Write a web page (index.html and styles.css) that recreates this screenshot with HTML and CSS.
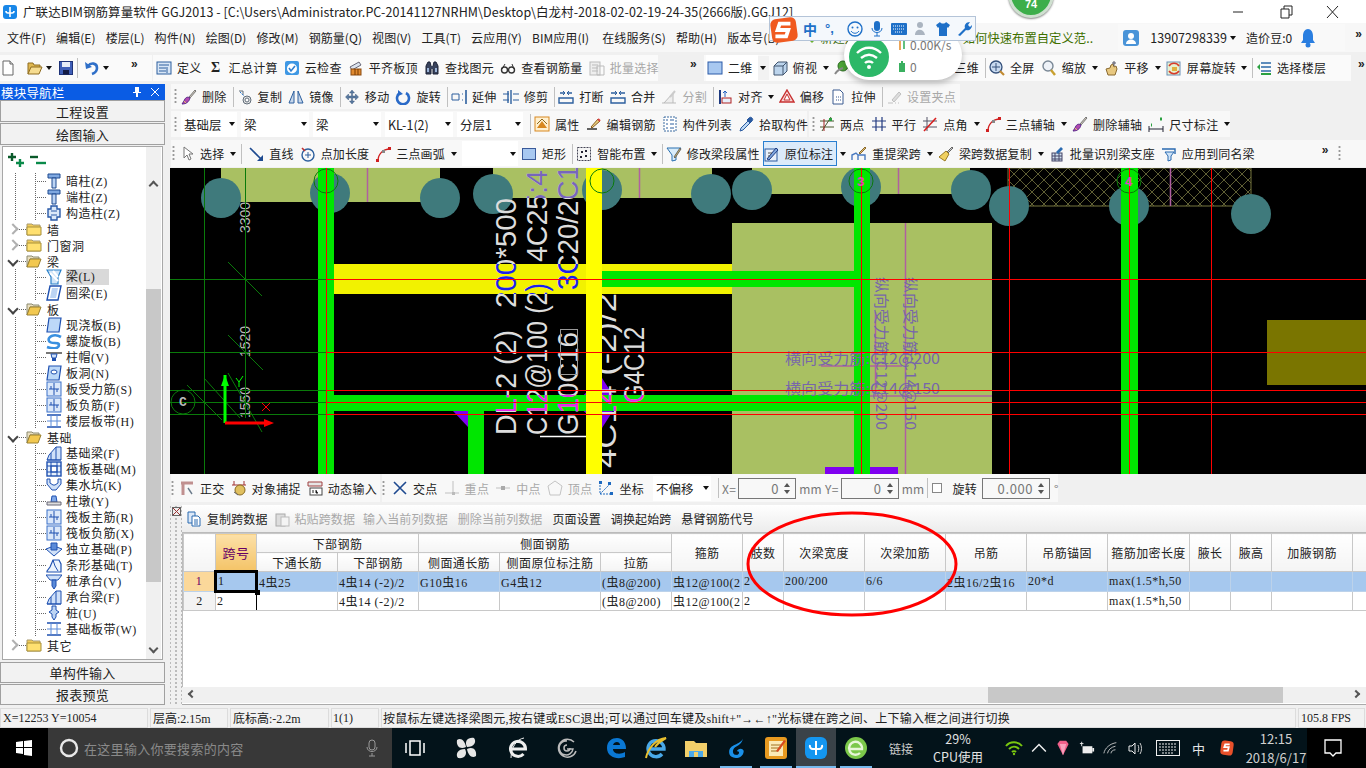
FILE: index.html
```html
<!DOCTYPE html>
<html lang="zh">
<head>
<meta charset="utf-8">
<title>GGJ2013</title>
<link rel="stylesheet" href="styles.css">
</head>
<body>
<svg class="sprite" aria-hidden="true">
<defs>
<symbol id="new" viewBox="0 0 16 16"><path d="M3 1h7l3 3v11H3z" fill="#fff" stroke="#666"/><path d="M10 1v3h3" fill="#ddd" stroke="#666"/></symbol>
<symbol id="open" viewBox="0 0 16 16"><path d="M1 14V3h5l1 2h6v2" fill="#e0b850" stroke="#8f6c20"/><path d="M1 14l3-7h11l-3 7z" fill="#f6dc90" stroke="#8f6c20"/></symbol>
<symbol id="save" viewBox="0 0 16 16"><rect x="1.5" y="1.5" width="13" height="13" fill="#3f5fb8" stroke="#1f3378"/><rect x="4" y="2" width="8" height="5" fill="#e6ecf8"/><rect x="5" y="10" width="6" height="4.5" fill="#121a44"/></symbol>
<symbol id="undo" viewBox="0 0 16 16"><path d="M4 6c3-4 9-3 9 2 0 3-2 5-5 6" fill="none" stroke="#2f6fc8" stroke-width="2.6"/><path d="M1 2l1 7 6-2z" fill="#2f6fc8"/></symbol>
<symbol id="def" viewBox="0 0 16 16"><rect x="1" y="2" width="14" height="12" fill="#d8e6f6" stroke="#2c5f9e"/><path d="M3 5h10M3 8h7M3 11h7M11 7v6" stroke="#2c5f9e"/></symbol>
<symbol id="check" viewBox="0 0 16 16"><rect x="1" y="1" width="14" height="14" rx="2" fill="#3f98e4"/><circle cx="8" cy="8.500" r="5" fill="#fff"/><path d="M5 8l2 3 4-5" fill="none" stroke="#2f7fd0" stroke-width="1.600"/></symbol>
<symbol id="flat" viewBox="0 0 16 16"><path d="M2 7l9-5 2 3-9 5z" fill="#dbe3ee" stroke="#667"/><rect x="3" y="9" width="10" height="6" fill="#e08a30" stroke="#8a4a10"/><path d="M7 9v6M10 9v6" stroke="#7a3a00"/></symbol>
<symbol id="bino" viewBox="0 0 16 16"><path d="M2 14V6l2-4h2l1 4v8zM9 14V6l1-4h2l2 4v8z" fill="#39435c" stroke="#1c2236"/><rect x="6" y="6" width="4" height="3" fill="#39435c"/><rect x="3" y="8" width="2" height="4" fill="#9cb4d8"/><rect x="11" y="8" width="2" height="4" fill="#9cb4d8"/></symbol>
<symbol id="glass" viewBox="0 0 16 16"><circle cx="4.500" cy="10" r="3" fill="none" stroke="#333" stroke-width="1.400"/><circle cx="11.500" cy="10" r="3" fill="none" stroke="#333" stroke-width="1.400"/><path d="M2 9l3-5M14 9l-2-5" stroke="#333"/></symbol>
<symbol id="batch" viewBox="0 0 16 16"><rect x="1" y="2" width="10" height="13" fill="#eee" stroke="#bbb"/><path d="M3 5h6M3 8h6M3 11h6M8 6h7v9H8z" fill="none" stroke="#bbb"/></symbol>
<symbol id="sq" viewBox="0 0 16 16"><rect x="1" y="2" width="14" height="12" fill="#a8c8f0" stroke="#2a5aa8"/></symbol>
<symbol id="box3d" viewBox="0 0 16 16"><path d="M2 6l4-4h9v9l-4 4H2z" fill="#bcd4ec" stroke="#40546e"/><path d="M2 6h9v9M11 6l4-4" fill="none" stroke="#40546e"/></symbol>
<symbol id="orbit" viewBox="0 0 16 16"><circle cx="9" cy="6" r="5" fill="#4ea838" stroke="#2a6a20"/><path d="M1 14c2-3 4-5 8-6" stroke="#888" stroke-width="2" fill="none"/></symbol>
<symbol id="zoomf" viewBox="0 0 16 16"><circle cx="7" cy="7" r="6" fill="#c8daf0" stroke="#34507a" stroke-width="1.300"/><path d="M7 3v8M3 7h8" stroke="#34507a"/><path d="M11 11l4 4" stroke="#c08a30" stroke-width="2.200"/></symbol>
<symbol id="zoom" viewBox="0 0 16 16"><circle cx="7" cy="6" r="5" fill="#eef2f8" stroke="#7a8896" stroke-width="1.400"/><path d="M10 10l4 5" stroke="#c8a030" stroke-width="2.400"/></symbol>
<symbol id="pan" viewBox="0 0 16 16"><path d="M3 9l2 6h7l2-6-1-3-2 1-1-3-2 1-1 3z" fill="#e8c880" stroke="#8a6a30"/><path d="M11 1v5M9 3h4" stroke="#556"/></symbol>
<symbol id="scr" viewBox="0 0 16 16"><rect x="1" y="2" width="13" height="13" fill="#e6f0d0" stroke="#6a90b8"/><path d="M3 6a6 6 0 0 1 10 0M13 11a6 6 0 0 1-10 0" fill="none" stroke="#d83a2a" stroke-width="1.500"/><rect x="6" y="7" width="5" height="4" fill="#e0b040"/></symbol>
<symbol id="floor" viewBox="0 0 16 16"><path d="M5 3h10M5 7h10M5 11h10" stroke="#2c6aa8" stroke-width="1.600"/><path d="M5 14h10" stroke="#2aa040" stroke-width="2"/><path d="M1 7l3-3v6z" fill="#2aa040"/></symbol>
<symbol id="brush" viewBox="0 0 16 16"><path d="M8 8l6-7 1 1-6 7z" fill="#d8d0c0" stroke="#777"/><path d="M9 9c-3-2-5 0-6 3l-2 3c4 0 7-2 8-6z" fill="#b04ab0" stroke="#5a2a8a"/><path d="M3 12l2 2" stroke="#e8c060"/></symbol>
<symbol id="copy" viewBox="0 0 16 16"><circle cx="10" cy="11" r="4" fill="#e8e8e8" stroke="#606c78"/><circle cx="10" cy="11" r="2" fill="#fff" stroke="#606c78"/><path d="M2 2h4v4" fill="none" stroke="#606c78"/><path d="M3 3l4 4" stroke="#2a7ad0" stroke-dasharray="2 1"/></symbol>
<symbol id="mirror" viewBox="0 0 16 16"><path d="M6 2v12H1zM10 2v12h5z" fill="#c8d8ec" stroke="#2c5f9e"/></symbol>
<symbol id="move" viewBox="0 0 16 16"><path d="M8 1l2.500 3h-2v3h3v-2l3 3-3 3V9h-3v3h2L8 15l-2.500-3h2V9h-3v2l-3-3 3-3v2h3V4h-2z" fill="#5a7aa0" stroke="#2c4a70" stroke-width=".4"/></symbol>
<symbol id="rot" viewBox="0 0 16 16"><path d="M5 4a6 6 0 1 0 6 0" fill="none" stroke="#2a6ac8" stroke-width="2.600"/><path d="M3 1v6l5-2z" fill="#2a6ac8"/></symbol>
<symbol id="extend" viewBox="0 0 16 16"><path d="M1 5h7v6H1zM11 5h1M11 11h1" fill="none" stroke="#2c5f9e"/><path d="M15 1v14" stroke="#2c5f9e" stroke-width="1.600"/></symbol>
<symbol id="trim" viewBox="0 0 16 16"><path d="M0 5h6M0 11h6M10 5h6M10 11h6" stroke="#2c5f9e"/><path d="M8 1v14M5 2v12" stroke="#2c5f9e" stroke-width="1.400"/></symbol>
<symbol id="break" viewBox="0 0 16 16"><path d="M1 9h14v5H1z" fill="none" stroke="#2c5f9e" stroke-width="1.400"/><path d="M2 4h4M14 4h-4" stroke="#2c5f9e" stroke-width="1.400"/><path d="M5 2l2 2-2 2M11 2L9 4l2 2" fill="none" stroke="#2c5f9e"/></symbol>
<symbol id="merge" viewBox="0 0 16 16"><path d="M1 9h14v5H1z" fill="none" stroke="#2c5f9e" stroke-width="1.400"/><path d="M1 4h5M15 4h-5" stroke="#2c5f9e" stroke-width="1.400"/><path d="M5 2l2 2-2 2M11 2L9 4l2 2" fill="none" stroke="#2c5f9e"/></symbol>
<symbol id="split" viewBox="0 0 16 16"><path d="M1 14h14M3 14l9-10v10" fill="#eee" stroke="#bbb"/><path d="M9 8l5-6" stroke="#ccc" stroke-width="2"/></symbol>
<symbol id="alignv" viewBox="0 0 16 16"><path d="M3 1v14" stroke="#1e3a80" stroke-width="2"/><rect x="5" y="9" width="9" height="5" fill="#e8f0fa" stroke="#b02020"/><path d="M8 2v6M6 4l2-2 2 2" stroke="#2060c0" fill="none"/></symbol>
<symbol id="offset" viewBox="0 0 16 16"><path d="M8 1l7 12H1z" fill="#f6d8d8" stroke="#c83030" stroke-width="1.400"/><path d="M8 5l3 6H5z" fill="#fff" stroke="#c83030"/></symbol>
<symbol id="stretch" viewBox="0 0 16 16"><path d="M3 1h7l3 3v11H3z" fill="#fff" stroke="#3a5a90"/><path d="M6 8h5M6 11h5" stroke="#3a5a90" stroke-dasharray="1 1"/></symbol>
<symbol id="grip2" viewBox="0 0 16 16"><path d="M2 14h5M9 14h1M12 14h1M6 11l7-8 2 2-7 8z" fill="#ddd" stroke="#c0c0c0"/></symbol>
<symbol id="attr" viewBox="0 0 16 16"><rect x="1" y="1" width="14" height="14" fill="#fff0d0" stroke="#d88820"/><path d="M3 12l5-7 5 7z" fill="#d88820"/><path d="M3 8l5-5 5 5" fill="none" stroke="#8a6a20"/></symbol>
<symbol id="edit" viewBox="0 0 16 16"><path d="M1 13h10" stroke="#222" stroke-width="1.400"/><path d="M5 11l7-8 2 2-8 7z" fill="#e8d080" stroke="#8a5a20"/><path d="M12 3l2 2" stroke="#d84040" stroke-width="2"/></symbol>
<symbol id="list" viewBox="0 0 16 16"><rect x="2" y="1" width="12" height="14" fill="#fff" stroke="#3a6aa0" stroke-dasharray="2 1"/><path d="M4 4h2M8 4h4M4 8h2M8 8h4M4 12h2M8 12h4" stroke="#2c5f9e"/></symbol>
<symbol id="pipette" viewBox="0 0 16 16"><path d="M2 15l1-3 7-7 2 2-7 7z" fill="#bcd8f4" stroke="#2a5aa0"/><path d="M10 3l3 3M11 2a2 2 0 0 1 3 3l-2 2-3-3z" fill="#2a5aa0" stroke="#2a5aa0"/></symbol>
<symbol id="twopt" viewBox="0 0 16 16"><path d="M1 5h14M1 11h14M12 1L3 15" stroke="#4a5a30"/><path d="M5 3v12" stroke="#a02020"/><rect x="10" y="2" width="3" height="3" fill="#2aa040"/></symbol>
<symbol id="para" viewBox="0 0 16 16"><path d="M1 5h14M1 11h14M5 1v14M11 1v14" stroke="#223a80" stroke-width="1.200"/></symbol>
<symbol id="ang" viewBox="0 0 16 16"><path d="M1 5h14M1 11h14M5 1v14" stroke="#556"/><path d="M2 15L14 2" stroke="#d82020" stroke-width="1.600"/></symbol>
<symbol id="arc3" viewBox="0 0 16 16"><path d="M3 15C3 8 8 3 15 3" fill="none" stroke="#d02020" stroke-width="1.400"/><rect x="1" y="13" width="3" height="3" fill="#d02020"/><rect x="7" y="4" width="3" height="3" fill="#888"/><rect x="13" y="1" width="3" height="3" fill="#d02020"/></symbol>
<symbol id="dim" viewBox="0 0 16 16"><path d="M1 13h14M1 10v6M15 10v6" stroke="#223"/><path d="M3 9h1M12 3h2" stroke="#2aa040" stroke-width="3"/></symbol>
<symbol id="cursor" viewBox="0 0 16 16"><path d="M5 1v11l3-3 2 5 2-1-2-5h4z" fill="#fff" stroke="#777"/></symbol>
<symbol id="line" viewBox="0 0 16 16"><path d="M2 2l11 11" stroke="#1e4a90" stroke-width="1.600"/><path d="M15 15h-6l6-6z" fill="#1e4a90"/></symbol>
<symbol id="ptlen" viewBox="0 0 16 16"><circle cx="8" cy="9" r="6" fill="none" stroke="#2c5f9e" stroke-width="1.400"/><path d="M8 6v6M5 9h6" stroke="#2c5f9e"/><path d="M2 2l3 3" stroke="#c03030" stroke-width="1.600"/></symbol>
<symbol id="rect" viewBox="0 0 16 16"><rect x="1.500" y="2.500" width="13" height="11" fill="#a8c8f0" stroke="#3a5a9a"/></symbol>
<symbol id="smart" viewBox="0 0 16 16"><rect x="1.500" y="1.500" width="13" height="13" fill="#f4f4f4" stroke="#445" stroke-dasharray="2 1"/><path d="M5 5h2v2H5zM9 9h2v2H9zM9 4h2v2H9zM4 10h2v2H4z" fill="#223"/></symbol>
<symbol id="filter" viewBox="0 0 16 16"><path d="M1 2h14l-5 7v5l-4 1V9z" fill="#d8ecfa" stroke="#2a70b0"/><path d="M8 11l6-9 1 1-6 9z" fill="#e0c060" stroke="#666"/></symbol>
<symbol id="orig" viewBox="0 0 16 16"><rect x="1" y="3" width="12" height="12" fill="#e8f0fa" stroke="#2a5aa0"/><path d="M3 13l9-11 2 2-9 10z" fill="#7fa8e0" stroke="#1e3a80"/><path d="M4 7h4M4 10h2" stroke="#555"/></symbol>
<symbol id="respan" viewBox="0 0 16 16"><path d="M1 14V9l4-2 2 2v5M7 14V9h7v5" fill="none" stroke="#4a7ac0" stroke-width="1.400"/><path d="M8 7l6-6 1 1-6 6z" fill="#e0c070" stroke="#8a6a30"/></symbol>
<symbol id="broom" viewBox="0 0 16 16"><path d="M9 6l5-5 1 1-5 5z" fill="#ccc" stroke="#666"/><path d="M8 5l3 3-4 7-6-4z" fill="#f0d060" stroke="#9a7a20"/></symbol>
<symbol id="bsup" viewBox="0 0 16 16"><rect x="3" y="7" width="10" height="8" fill="#d0e0f0" stroke="#446"/><path d="M3 10h10M3 13h10M6 7v8M10 7v8" stroke="#446"/><path d="M7 6l5-5 2 2-5 5z" fill="#2a6ab0"/></symbol>
<symbol id="apply" viewBox="0 0 16 16"><path d="M1 3h13v5" fill="none" stroke="#2a6ab0" stroke-width="1.400"/><path d="M4 6l9 0-3 4v4l-3 1v-5z" fill="#cfe4f8" stroke="#2a6ab0"/></symbol>
<symbol id="ortho" viewBox="0 0 16 16"><path d="M2 3h12" stroke="#c09090" stroke-width="3"/><path d="M4 3v12" stroke="#c09090" stroke-width="3"/><path d="M9 8l4 6" stroke="#6a7a8a" stroke-width="1.400"/></symbol>
<symbol id="snap" viewBox="0 0 16 16"><path d="M3 1v4M13 1v4M1 5h14" stroke="#a03030"/><circle cx="9" cy="10" r="5" fill="#e0c060" stroke="#8a6a20"/><path d="M3 12l4 3" stroke="#666"/></symbol>
<symbol id="dyn" viewBox="0 0 16 16"><path d="M1 2h14v4H1z" fill="#e6e6e6" stroke="#a04040"/><rect x="3" y="8" width="12" height="7" fill="#fff" stroke="#444"/><path d="M6 10v3M9 10v3h2" stroke="#222"/></symbol>
<symbol id="xpt" viewBox="0 0 16 16"><path d="M2 2l12 12M14 2L2 14" stroke="#1e4a90" stroke-width="1.600"/></symbol>
<symbol id="perp" viewBox="0 0 16 16"><path d="M9 1v12M1 13h14" stroke="#c0c0c0"/><rect x="8" y="12" width="3" height="3" fill="#bbb"/></symbol>
<symbol id="mid" viewBox="0 0 16 16"><path d="M1 8h14" stroke="#c0c0c0"/><rect x="6" y="6" width="4" height="4" fill="#aaa"/></symbol>
<symbol id="vert" viewBox="0 0 16 16"><path d="M8 1l7 5-2 9H3L1 6z" fill="#f8f8f8" stroke="#c4c4c4"/></symbol>
<symbol id="coord" viewBox="0 0 16 16"><path d="M2 2v12h12M2 14l10-10" stroke="#1e6ac0" stroke-dasharray="2 1" fill="none"/><path d="M1 1h3v3H1zM12 12h3v3h-3zM10 2h3v3h-3z" fill="#1e6ac0"/></symbol>
<symbol id="paste" viewBox="0 0 16 16"><rect x="2" y="3" width="9" height="12" fill="#ddd" stroke="#aaa"/><rect x="7" y="6" width="8" height="9" fill="#f4f4f4" stroke="#bbb"/></symbol>
<symbol id="dup" viewBox="0 0 16 16"><path d="M2 1h7v11H2z" fill="#dbe8f8" stroke="#2a6ab0"/><path d="M6 5h6l2 2v8H6z" fill="#fff" stroke="#2a6ab0"/><path d="M8 9h4M8 11h4M8 13h4" stroke="#2a6ab0"/></symbol>
<symbol id="col" viewBox="0 0 16 16"><path d="M2 1h12v4H2z" fill="#7fa8e0" stroke="#1e4a90"/><path d="M6 5h4v10H6z" fill="#bcd4f4" stroke="#1e4a90"/></symbol>
<symbol id="gcol" viewBox="0 0 16 16"><path d="M5 1h6v3h3v8h-3v3H5v-3H2V4h3z" fill="#dbe8f8" stroke="#2a5aa8" stroke-width="1.400"/><path d="M5 6h6M5 10h6" stroke="#2a5aa8"/></symbol>
<symbol id="fc" viewBox="0 0 16 16"><path d="M1 3h5l1 1h7v10H1z" fill="#f2cc58" stroke="#a89a70"/><path d="M1 6h14v8H1z" fill="#ffe070" stroke="#a8903a"/></symbol>
<symbol id="fo" viewBox="0 0 16 16"><path d="M1 3h5l1 1h6v2H4l-3 8z" fill="#eadfc0" stroke="#8a8a70"/><path d="M1 14l3-8h11l-3 8z" fill="#f2c850" stroke="#9a8030"/></symbol>
<symbol id="beam" viewBox="0 0 16 16"><path d="M1 1h14l-3 7v7H5V8z" fill="#cfe4f8" stroke="#2a80c8" stroke-width="1.200"/><path d="M4 4l8 8M7 2l5 6" stroke="#fff" stroke-width="2"/></symbol>
<symbol id="ring" viewBox="0 0 16 16"><path d="M4 1h11l-3 14H1z" fill="#fff" stroke="#1e50b0" stroke-width="1.400"/><path d="M6 3h6l-2 10H4z" fill="#bcd4f4"/></symbol>
<symbol id="plate" viewBox="0 0 16 16"><path d="M3 1h12l-2 14H1z" fill="#bcd8f8" stroke="#1e50b0" stroke-width="1.200"/></symbol>
<symbol id="spiral" viewBox="0 0 16 16"><path d="M15 4C8 0 1 4 3 8s10 0 10 4-6 4-12 2" fill="none" stroke="#3a90e0" stroke-width="2.600"/></symbol>
<symbol id="cap" viewBox="0 0 16 16"><path d="M0 3h16v2H0z" fill="#777"/><path d="M5 5h6l-1 4H6z" fill="#cfe0f8" stroke="#1e50b0"/><path d="M6 9h4v3H6z" fill="#1e50b0"/></symbol>
<symbol id="hole" viewBox="0 0 16 16"><path d="M3 1h12l-2 14H1z" fill="#bcd8f8" stroke="#1e50b0" stroke-width="1.200"/><ellipse cx="8" cy="7" rx="3" ry="2" fill="#fff" stroke="#1e50b0"/></symbol>
<symbol id="rebar" viewBox="0 0 16 16"><rect x="1" y="1" width="14" height="14" fill="#dbe8fa" stroke="#3a70c8"/><path d="M8 2v12M3 8h10M5 5v3M11 8v3" stroke="#1e50b0"/></symbol>
<symbol id="band" viewBox="0 0 16 16"><path d="M1 2h14M1 14h14" stroke="#1e50b0" stroke-width="1.600"/><path d="M5 2v12M11 2v12M1 8h14" stroke="#5a8ad8"/></symbol>
<symbol id="fb" viewBox="0 0 16 16"><path d="M1 15l2-5 7-8 5 0v13z" fill="#cfe0f8" stroke="#1e50b0"/><path d="M10 2v13M1 15h14M5 8v7" stroke="#1e50b0"/></symbol>
<symbol id="raft" viewBox="0 0 16 16"><rect x="1" y="1" width="14" height="14" fill="#e6f0fc" stroke="#1e50b0" stroke-width="1.400"/><rect x="5" y="5" width="6" height="6" fill="#fff" stroke="#1e50b0"/><path d="M5 1v14M11 1v14M1 5h14M1 11h14" stroke="#1e50b0"/></symbol>
<symbol id="pit" viewBox="0 0 16 16"><path d="M1 2h3v4l3 2h2l3-2V2h3v5l-5 6H6L1 7z" fill="#cfe0f8" stroke="#1e50b0"/></symbol>
<symbol id="pier" viewBox="0 0 16 16"><path d="M6 3h4l1 6H5z" fill="#7fa8e8" stroke="#1e50b0"/><path d="M1 9h14v3H1z" fill="#ddd" stroke="#667"/></symbol>
<symbol id="iso" viewBox="0 0 16 16"><path d="M0 8l8-3 8 3-8 7z" fill="#cfe0f8" stroke="#1e50b0"/><path d="M5 2h6v7H5z" fill="#5a8ad8" stroke="#1e50b0"/></symbol>
<symbol id="strip" viewBox="0 0 16 16"><path d="M1 14l3-4 3-7h6l2 4v8H1z" fill="#eaf2fc" stroke="#1e50b0" stroke-width="1.200"/><path d="M7 3l2 6 3 5" fill="none" stroke="#1e50b0"/></symbol>
<symbol id="pc" viewBox="0 0 16 16"><path d="M0 2h16l-4 5H4z" fill="#cfe0f8" stroke="#1e50b0"/><path d="M6 7h4v6l-2 3-2-3z" fill="#5a8ad8" stroke="#1e50b0"/></symbol>
<symbol id="pile" viewBox="0 0 16 16"><path d="M6 1h4v4l3 2-3 2v3l-2 3-2-3V9L3 7l3-2z" fill="#bcd4f4" stroke="#1e50b0"/></symbol>
</defs>
</svg>

<div class="app">
  <header class="titlebar">
    <svg class="tlogo" viewBox="0 0 14 14"><rect width="14" height="14" rx="3" fill="#1887e8"/><path d="M7 2v10M3 6a2 2 0 0 0 2 2h4a2 2 0 0 0 2-2" fill="none" stroke="#fff" stroke-width="1.600"/></svg>
    <span class="ttext">广联达BIM钢筋算量软件 GGJ2013 - [C:\Users\Administrator.PC-20141127NRHM\Desktop\白龙村-2018-02-02-19-24-35(2666版).GGJ12]</span>
    <span class="winctl">
      <svg viewBox="0 0 46 20"><path d="M0 10h10" stroke="#222"/></svg>
      <svg viewBox="0 0 46 20"><path d="M2 7h8v9H2zM5 7V4h8v9h-3" fill="none" stroke="#222"/></svg>
      <svg viewBox="0 0 46 20"><path d="M2 4l11 12M13 4L2 16" stroke="#222"/></svg>
    </span>
  </header>

  <nav class="menubar">
    <span>文件(F)</span><span>编辑(E)</span><span>楼层(L)</span><span>构件(N)</span><span>绘图(D)</span><span>修改(M)</span><span>钢筋量(Q)</span><span>视图(V)</span><span>工具(T)</span><span>云应用(Y)</span><span>BIM应用(I)</span><span class="mserv">在线服务(S)</span><span>帮助(H)</span><span>版本号(B)</span>
    <span class="mnew"><svg viewBox="0 0 12 12"><path d="M1 6l5-5 5 5-5 5z" fill="#6ab030"/></svg>新建定义</span>
    <span class="mtip">如何快速布置自定义范..</span>
    <div class="muser">
      <svg class="i" viewBox="0 0 16 16"><rect width="16" height="16" rx="3" fill="#4a94d8"/><circle cx="8" cy="6" r="3" fill="#fff"/><path d="M3 14c0-6 10-6 10 0z" fill="#fff"/></svg>
      <span class="uname">13907298339</span><i class="dd"></i>
      <span class="bean">造价豆:0</span>
      <svg class="bell" viewBox="0 0 14 20"><path d="M7 1c3 0 5 3 5 7v4l2 3H0l2-3V8c0-4 2-7 5-7z" fill="#2a7ee0"/><circle cx="7" cy="17" r="2.500" fill="#2a7ee0"/></svg>
    </div>
    <span class="more mr">»</span>
  </nav>

  <div class="tool1">
    <div class="grp g1">
      <svg class="i"><use href="#new"/></svg>
      <svg class="i m11"><use href="#open"/></svg><i class="dd"></i>
      <svg class="i m4"><use href="#save"/></svg>
      <i class="sep"></i>
      <svg class="i m6"><use href="#undo"/></svg><i class="dd"></i>
      <span class="more m16">»</span>
    </div>
    <div class="grp g2">
      <span class="it"><svg class="i"><use href="#def"/></svg>定义</span>
      <span class="it"><b class="sigma">Σ</b>汇总计算</span>
      <span class="it"><svg class="i"><use href="#check"/></svg>云检查</span>
      <span class="it"><svg class="i"><use href="#flat"/></svg>平齐板顶</span>
      <span class="it"><svg class="i"><use href="#bino"/></svg>查找图元</span>
      <span class="it"><svg class="i"><use href="#glass"/></svg>查看钢筋量</span>
      <span class="it off"><svg class="i"><use href="#batch"/></svg>批量选择</span>
    </div>
    <span class="more m32">»</span>
    <div class="grp g3">
      <span class="it white"><svg class="i"><use href="#sq"/></svg>二维</span><span class="ddbox"><i class="dd"></i></span>
      <span class="it"><svg class="i"><use href="#box3d"/></svg>俯视</span><i class="dd"></i>
      <span class="it"><svg class="i"><use href="#orbit"/></svg>动态观察</span>
      <span class="it gap3d"><svg class="i"><use href="#box3d"/></svg>三维</span>
      <i class="sep"></i>
      <span class="it"><svg class="i"><use href="#zoomf"/></svg>全屏</span>
      <span class="it"><svg class="i"><use href="#zoom"/></svg>缩放</span><i class="dd"></i>
      <span class="it"><svg class="i"><use href="#pan"/></svg>平移</span><i class="dd"></i>
      <span class="it"><svg class="i"><use href="#scr"/></svg>屏幕旋转</span><i class="dd tight"></i>
      <i class="sep"></i>
      <span class="it"><svg class="i"><use href="#floor"/></svg>选择楼层</span>
    </div>
    <span class="more mr2">»</span>
  </div>

  <div class="main">
    <aside class="side">
      <div class="navhead"><span>模块导航栏</span>
        <span class="navctl">
          <svg viewBox="0 0 10 12"><path d="M3 1h4v5h2v1H6v4H4V7H1V6h2z" fill="#fff"/></svg>
          <svg viewBox="0 0 10 12"><path d="M1 2l8 8M9 2l-8 8" stroke="#fff"/></svg>
        </span>
      </div>
      <button class="sbtn">工程设置</button>
      <button class="sbtn">绘图输入</button>
      <div class="tree">
        <div class="treetool">
          <svg viewBox="0 0 20 16"><path d="M2 5h8M6 1v8" stroke="#0a5a2a" stroke-width="2.400"/><path d="M10 11h8M14 7v8" stroke="#0a8a4a" stroke-width="2.400"/></svg>
          <svg viewBox="0 0 20 16"><path d="M2 5h8" stroke="#0a5a2a" stroke-width="2.400"/><path d="M8 11h10" stroke="#0a8a4a" stroke-width="2.400"/></svg>
        </div>
        <div class="rows">
          <div class="r l2"><i class="tk"></i><svg class="i"><use href="#col"/></svg>暗柱(Z)</div>
          <div class="r l2"><i class="tk"></i><svg class="i"><use href="#col"/></svg>端柱(Z)</div>
          <div class="r l2"><i class="tk"></i><svg class="i"><use href="#gcol"/></svg>构造柱(Z)</div>
          <div class="r l1"><i class="ch cl"></i><i class="tk1"></i><svg class="i"><use href="#fc"/></svg>墙</div>
          <div class="r l1"><i class="ch cl"></i><i class="tk1"></i><svg class="i"><use href="#fc"/></svg>门窗洞</div>
          <div class="r l1"><i class="ch ex"></i><i class="tk1"></i><svg class="i"><use href="#fo"/></svg>梁</div>
          <div class="r l2 sel1"><i class="tk"></i><svg class="i"><use href="#beam"/></svg><span class="hl">梁(L)</span></div>
          <div class="r l2"><i class="tk"></i><svg class="i"><use href="#ring"/></svg>圈梁(E)</div>
          <div class="r l1"><i class="ch ex"></i><i class="tk1"></i><svg class="i"><use href="#fo"/></svg>板</div>
          <div class="r l2"><i class="tk"></i><svg class="i"><use href="#plate"/></svg>现浇板(B)</div>
          <div class="r l2"><i class="tk"></i><svg class="i"><use href="#spiral"/></svg>螺旋板(B)</div>
          <div class="r l2"><i class="tk"></i><svg class="i"><use href="#cap"/></svg>柱帽(V)</div>
          <div class="r l2"><i class="tk"></i><svg class="i"><use href="#hole"/></svg>板洞(N)</div>
          <div class="r l2"><i class="tk"></i><svg class="i"><use href="#rebar"/></svg>板受力筋(S)</div>
          <div class="r l2"><i class="tk"></i><svg class="i"><use href="#rebar"/></svg>板负筋(F)</div>
          <div class="r l2"><i class="tk"></i><svg class="i"><use href="#band"/></svg>楼层板带(H)</div>
          <div class="r l1"><i class="ch ex"></i><i class="tk1"></i><svg class="i"><use href="#fo"/></svg>基础</div>
          <div class="r l2"><i class="tk"></i><svg class="i"><use href="#fb"/></svg>基础梁(F)</div>
          <div class="r l2"><i class="tk"></i><svg class="i"><use href="#raft"/></svg>筏板基础(M)</div>
          <div class="r l2"><i class="tk"></i><svg class="i"><use href="#pit"/></svg>集水坑(K)</div>
          <div class="r l2"><i class="tk"></i><svg class="i"><use href="#pier"/></svg>柱墩(Y)</div>
          <div class="r l2"><i class="tk"></i><svg class="i"><use href="#rebar"/></svg>筏板主筋(R)</div>
          <div class="r l2"><i class="tk"></i><svg class="i"><use href="#rebar"/></svg>筏板负筋(X)</div>
          <div class="r l2"><i class="tk"></i><svg class="i"><use href="#iso"/></svg>独立基础(P)</div>
          <div class="r l2"><i class="tk"></i><svg class="i"><use href="#strip"/></svg>条形基础(T)</div>
          <div class="r l2"><i class="tk"></i><svg class="i"><use href="#pc"/></svg>桩承台(V)</div>
          <div class="r l2"><i class="tk"></i><svg class="i"><use href="#fb"/></svg>承台梁(F)</div>
          <div class="r l2"><i class="tk"></i><svg class="i"><use href="#pile"/></svg>桩(U)</div>
          <div class="r l2 last"><i class="tk"></i><svg class="i"><use href="#band"/></svg>基础板带(W)</div>
          <div class="r l1"><i class="ch cl"></i><i class="tk1"></i><svg class="i"><use href="#fc"/></svg>其它</div>
        </div>
        <div class="vscroll">
          <i class="arr up"></i>
          <i class="thumb"></i>
          <i class="arr down"></i>
        </div>
      </div>
      <button class="sbtn b2">单构件输入</button>
      <button class="sbtn b2">报表预览</button>
    </aside>

    <section class="work">
      <div class="row r2">
        <i class="grip"></i>
        <span class="it"><svg class="i"><use href="#brush"/></svg>删除</span><i class="sep"></i>
        <span class="it"><svg class="i"><use href="#copy"/></svg>复制</span>
        <span class="it"><svg class="i"><use href="#mirror"/></svg>镜像</span><i class="sep"></i>
        <span class="it"><svg class="i"><use href="#move"/></svg>移动</span>
        <span class="it"><svg class="i"><use href="#rot"/></svg>旋转</span><i class="sep"></i>
        <span class="it"><svg class="i"><use href="#extend"/></svg>延伸</span>
        <span class="it"><svg class="i"><use href="#trim"/></svg>修剪</span><i class="sep"></i>
        <span class="it"><svg class="i"><use href="#break"/></svg>打断</span>
        <span class="it"><svg class="i"><use href="#merge"/></svg>合并</span>
        <span class="it off"><svg class="i"><use href="#split"/></svg>分割</span><i class="sep"></i>
        <span class="it"><svg class="i"><use href="#alignv"/></svg>对齐</span><i class="dd tight"></i>
        <span class="it"><svg class="i"><use href="#offset"/></svg>偏移</span>
        <span class="it"><svg class="i"><use href="#stretch"/></svg>拉伸</span><i class="sep"></i>
        <span class="it off"><svg class="i"><use href="#grip2"/></svg>设置夹点</span>
      </div>
      <div class="row3wrap">
        <div class="row r3">
          <i class="grip"></i>
          <span class="sel s56">基础层<i class="dd"></i></span>
          <span class="sel s68">梁<i class="dd"></i></span>
          <span class="sel s68">梁<i class="dd"></i></span>
          <span class="sel s68">KL-1(2)<i class="dd"></i></span>
          <span class="sel s66">分层1<i class="dd"></i></span><i class="sep"></i>
          <span class="it"><svg class="i"><use href="#attr"/></svg>属性</span>
          <span class="it"><svg class="i"><use href="#edit"/></svg>编辑钢筋</span>
          <span class="it"><svg class="i"><use href="#list"/></svg>构件列表</span>
          <span class="it"><svg class="i"><use href="#pipette"/></svg>拾取构件</span>
        </div>
        <div class="row r3b">
          <i class="grip"></i>
          <span class="it"><svg class="i"><use href="#twopt"/></svg>两点</span>
          <span class="it"><svg class="i"><use href="#para"/></svg>平行</span>
          <span class="it"><svg class="i"><use href="#ang"/></svg>点角</span><i class="dd"></i>
          <span class="it"><svg class="i"><use href="#arc3"/></svg>三点辅轴</span><i class="dd"></i>
          <span class="it"><svg class="i"><use href="#brush"/></svg>删除辅轴</span>
          <span class="it"><svg class="i"><use href="#dim"/></svg>尺寸标注</span><i class="dd"></i>
        </div>
      </div>
      <div class="row r4">
        <i class="grip"></i>
        <span class="it"><svg class="i"><use href="#cursor"/></svg>选择</span><i class="dd"></i><i class="sep sepx"></i>
        <span class="it"><svg class="i"><use href="#line"/></svg>直线</span>
        <span class="it"><svg class="i"><use href="#ptlen"/></svg>点加长度</span>
        <span class="it"><svg class="i"><use href="#arc3"/></svg>三点画弧</span><i class="dd"></i>
        <span class="sel s56 blank"><i class="dd"></i></span>
        <span class="it"><svg class="i"><use href="#rect"/></svg>矩形</span><i class="sep"></i>
        <span class="it"><svg class="i"><use href="#smart"/></svg>智能布置</span><i class="dd tight"></i><i class="sep"></i>
        <span class="it"><svg class="i"><use href="#filter"/></svg>修改梁段属性</span>
        <span class="it act"><svg class="i"><use href="#orig"/></svg>原位标注</span><i class="dd"></i>
        <span class="it"><svg class="i"><use href="#respan"/></svg>重提梁跨</span><i class="dd"></i>
        <span class="it"><svg class="i"><use href="#broom"/></svg>梁跨数据复制</span><i class="dd"></i>
        <span class="it"><svg class="i"><use href="#bsup"/></svg>批量识别梁支座</span>
        <span class="it"><svg class="i"><use href="#apply"/></svg>应用到同名梁</span>
        <span class="more m64">»</span>
        <i class="grip gr"></i>
      </div>

      <svg class="canvas" viewBox="170 168 1196 306" role="img" aria-label="梁平面布置图">
        <defs>
          <pattern id="hatch" width="12" height="12" patternUnits="userSpaceOnUse"><path d="M0 0l12 12M12 0L0 12" class="hl-line"/></pattern>
          <clipPath id="onYellow"><rect x="334" y="264" width="252" height="30"/></clipPath>
          <clipPath id="onGreen"><rect x="334" y="395" width="520" height="16"/></clipPath>
          <clipPath id="onOlive"><rect x="493" y="168" width="219" height="30"/></clipPath>
          <g id="captions">
            <text transform="translate(516,435) rotate(-90)" textLength="105" lengthAdjust="spacingAndGlyphs">DL-2 (2)</text>
            <text transform="translate(516,308) rotate(-90)" textLength="110" lengthAdjust="spacingAndGlyphs">200*500</text>
            <text transform="translate(547,435) rotate(-90)" textLength="152" lengthAdjust="spacingAndGlyphs">C12@100 (2)</text>
            <text transform="translate(547,262) rotate(-90)" textLength="92" lengthAdjust="spacingAndGlyphs">4C25:4</text>
            <text transform="translate(578,435) rotate(-90)" textLength="103" lengthAdjust="spacingAndGlyphs">G10C16</text>
            <text transform="translate(578,290) rotate(-90)" textLength="125" lengthAdjust="spacingAndGlyphs">3C20/2C1</text>
            <text transform="translate(616,468) rotate(-90)" textLength="175" lengthAdjust="spacingAndGlyphs">4C14 (-2)/2</text>
            <text transform="translate(644,403) rotate(-90)" textLength="76" lengthAdjust="spacingAndGlyphs">G4C12</text>
          </g>
        </defs>
        <rect x="170" y="168" width="1196" height="306" fill="#000"/>
        <g class="olive">
          <rect x="221" y="168" width="219" height="34"/>
          <rect x="493" y="168" width="219" height="30"/>
          <rect x="752" y="168" width="218" height="26"/>
          <rect x="732" y="223" width="260" height="251"/>
        </g>
        <rect x="1267" y="320" width="99" height="65" class="dkolive"/>
        <rect x="1008" y="168" width="243" height="38" fill="url(#hatch)" class="hatch"/>
        <g class="teal">
          <ellipse cx="221" cy="198" rx="20" ry="20"/><ellipse cx="330" cy="193" rx="20" ry="20"/><ellipse cx="440" cy="198" rx="20" ry="20"/>
          <ellipse cx="493" cy="194" rx="20" ry="20"/><ellipse cx="602" cy="190" rx="20" ry="20"/><ellipse cx="711" cy="194" rx="20" ry="20"/>
          <ellipse cx="752" cy="190" rx="20" ry="20"/><ellipse cx="861" cy="187" rx="20" ry="20"/><ellipse cx="971" cy="190" rx="20" ry="20"/>
          <ellipse cx="1009" cy="206" rx="20" ry="20"/><ellipse cx="1129" cy="206" rx="20" ry="20"/><ellipse cx="1251" cy="214" rx="20" ry="20"/>
        </g>
        <g class="mag">
          <path d="M367.500 168v34M639.500 168v30M898.500 168v26M1170.500 168v38M905.500 223v251M732 396h260M821 366h81M875.500 312v84"/>
        </g>
        <rect x="334" y="264" width="398" height="30" class="yel"/>
        <rect x="602" y="271" width="252" height="16" class="grn"/>
        <path d="M453 411h15v16zM575 403l27-25 16 25-16 25z" class="vio"/>
        <rect x="825" y="467" width="73" height="7" class="vio"/>
        <g class="grn">
          <rect x="318" y="168" width="16" height="306"/><rect x="854" y="168" width="16" height="306"/>
          <rect x="1121" y="168" width="17" height="306"/><rect x="468" y="411" width="16" height="63"/>
          <rect x="334" y="395" width="520" height="16"/>
        </g>
        <g class="capt">
          <use href="#captions" class="c-white"/>
          <use href="#captions" class="c-blue" clip-path="url(#onYellow)"/>
          <use href="#captions" class="c-pink" clip-path="url(#onGreen)"/>
          <use href="#captions" class="c-purple" clip-path="url(#onOlive)"/>
        </g>
        <rect x="560.500" y="329.500" width="17" height="45" class="box"/>
        <path d="M540 436.500h46" class="wline"/>
        <rect x="586" y="168" width="16" height="306" class="yel2"/>
        <g class="purtxt">
          <text x="785" y="364" textLength="155" lengthAdjust="spacingAndGlyphs">横向受力筋:C12@200</text>
          <text x="785" y="394" textLength="155" lengthAdjust="spacingAndGlyphs">横向受力筋:C14@150</text>
          <text transform="translate(876,277) rotate(90)" textLength="153" lengthAdjust="spacingAndGlyphs">纵向受力筋:C12@200</text>
          <text transform="translate(905,277) rotate(90)" textLength="153" lengthAdjust="spacingAndGlyphs">纵向受力筋:C14@150</text>
        </g>
        <g class="dimtxt">
          <text transform="translate(250,233) rotate(-90)">3300</text>
          <text transform="translate(250,357) rotate(-90)">1520</text>
          <text transform="translate(250,418) rotate(-90)">1550</text>
        </g>
        <g class="gline">
          <path d="M204.500 168v306M245.500 168v250M170 279.500h156M170 352.500h156M170 390.500h156M170 402.500h156M170 414.500h156"/>
          <path d="M228 262l34 34M228 335l35 35M187 385l35 35M228 373l34 59M204 378l36 40"/>
          <circle cx="183" cy="402" r="12"/><circle cx="326" cy="181" r="12"/><circle cx="602" cy="181" r="12"/><circle cx="861" cy="181" r="12"/><circle cx="1129" cy="181" r="12"/>
        </g>
        <path d="M326.500 168v306M861.500 168v306M1009.500 168v306M1129.500 168v306M1211.500 168v306M326 279.500h1040M326 352.500h1040M326 390.500h1040M326 402.500h1040M326 414.500h1040" class="rline"/>
        <text x="183" y="406" class="axl">C</text>
        <text x="857" y="186" class="axm">3</text>
        <text x="1125" y="186" class="axm">4</text>
        <path d="M225 375v48" class="axg"/><path d="M221 386l4-11 4 11z" class="axgf"/>
        <path d="M225 423h44" class="axr"/><path d="M264 419l10 4-10 4z" class="axrf"/>
        <path d="M236 378l3 4 4-6M239 382v5" class="thing"/><path d="M262 403l8 8M270 403l-8 8" class="thinr"/>
      </svg>

      <div class="snap">
        <div class="sgrp s1">
          <i class="grip"></i>
          <span class="it"><svg class="i"><use href="#ortho"/></svg>正交</span>
          <span class="it"><svg class="i"><use href="#snap"/></svg>对象捕捉</span>
          <span class="it"><svg class="i"><use href="#dyn"/></svg>动态输入</span>
        </div>
        <div class="sgrp s2">
          <i class="grip"></i>
          <span class="it"><svg class="i"><use href="#xpt"/></svg>交点</span>
          <span class="it off"><svg class="i"><use href="#perp"/></svg>重点</span>
          <span class="it off"><svg class="i"><use href="#mid"/></svg>中点</span>
          <span class="it off"><svg class="i"><use href="#vert"/></svg>顶点</span>
          <span class="it"><svg class="i"><use href="#coord"/></svg>坐标</span>
          <span class="sel s58 m6">不偏移<i class="dd"></i></span>
          <i class="sep"></i>
          <span class="lab">X=</span><span class="spin w56">0<i class="sp"></i></span><span class="lab">mm</span>
          <span class="lab">Y=</span><span class="spin w58">0<i class="sp"></i></span><span class="lab">mm</span>
          <i class="sep"></i>
          <i class="cb"></i><span class="rotl">旋转</span><span class="spin w68">0.000<i class="sp"></i></span><span class="lab deg">°</span>
        </div>
      </div>

      <div class="panel">
        <div class="strip"><svg class="xb" viewBox="0 0 9 9"><rect x=".5" y=".5" width="8" height="8" fill="#eee" stroke="#666"/><path d="M1 1l7 7M8 1L1 8" stroke="#933"/></svg></div>
        <div class="pbody">
          <div class="ptool">
            <span class="it"><svg class="i"><use href="#dup"/></svg>复制跨数据</span>
            <span class="it off"><svg class="i"><use href="#paste"/></svg>粘贴跨数据</span>
            <span class="pt off">输入当前列数据</span>
            <span class="pt off">删除当前列数据</span>
            <span class="pt">页面设置</span>
            <span class="pt">调换起始跨</span>
            <span class="pt">悬臂钢筋代号</span>
          </div>
          <div class="grid">
            <table>
              <colgroup><col class="w32"><col class="w41"><col class="w81"><col class="w81"><col class="w81"><col class="w101"><col class="w71"><col class="w71"><col class="w41"><col class="w81"><col class="w81"><col class="w81"><col class="w81"><col class="w82"><col class="w41"><col class="w41"><col class="w81"><col class="w15"></colgroup>
              <thead>
                <tr><th rowspan="2"></th><th rowspan="2" class="kua">跨号</th><th colspan="2">下部钢筋</th><th colspan="3">侧面钢筋</th><th rowspan="2">箍筋</th><th rowspan="2">肢数</th><th rowspan="2">次梁宽度</th><th rowspan="2">次梁加筋</th><th rowspan="2">吊筋</th><th rowspan="2">吊筋锚固</th><th rowspan="2">箍筋加密长度</th><th rowspan="2">腋长</th><th rowspan="2">腋高</th><th rowspan="2">加腋钢筋</th><th rowspan="2"></th></tr>
                <tr><th>下通长筋</th><th>下部钢筋</th><th>侧面通长筋</th><th>侧面原位标注筋</th><th>拉筋</th></tr>
              </thead>
              <tbody>
                <tr class="on"><td class="no">1</td><td class="cur">1<i class="handle"></i></td><td>4虫25</td><td>4虫14 (-2)/2</td><td>G10虫16</td><td>G4虫12</td><td>(虫8@200)</td><td>虫12@100(2</td><td>2</td><td>200/200</td><td>6/6</td><td>2虫16/2虫16</td><td>20*d</td><td>max(1.5*h,50</td><td></td><td></td><td></td><td></td></tr>
                <tr class="r2nd"><td class="no">2</td><td class="below">2</td><td></td><td>4虫14 (-2)/2</td><td></td><td></td><td>(虫8@200)</td><td>虫12@100(2</td><td>2</td><td></td><td></td><td></td><td></td><td>max(1.5*h,50</td><td></td><td></td><td></td><td></td></tr>
              </tbody>
            </table>
          </div>
          <div class="hscroll"><i class="arr left"></i><i class="hthumb"></i><i class="arr right"></i></div>
        </div>
      </div>
    </section>
  </div>

  <footer class="status">
    <span class="c c1">X=12253 Y=10054</span>
    <span class="c c2">层高:2.15m</span>
    <span class="c c3">底标高:-2.2m</span>
    <span class="c c4">1(1)</span>
    <span class="c c5">按鼠标左键选择梁图元,按右键或ESC退出;可以通过回车键及shift+"→←↑"光标键在跨之间、上下输入框之间进行切换</span>
    <span class="c c6">105.8 FPS</span>
  </footer>

  <div class="taskbar">
    <span class="start"><svg viewBox="0 0 16 16"><path d="M0 2l7-1v6H0zM8 1l8-1v7H8zM0 8h7v6l-7-1zM8 8h8v8l-8-1z" fill="#fff"/></svg></span>
    <div class="search">
      <svg class="cort" viewBox="0 0 20 20"><circle cx="10" cy="10" r="8" fill="none" stroke="#e8e8e8" stroke-width="2.400"/></svg>
      <span class="stext">在这里输入你要搜索的内容</span>
      <svg class="mic" viewBox="0 0 12 18"><rect x="3" y="1" width="6" height="10" rx="3" fill="none" stroke="#999"/><path d="M1 8c0 6 10 6 10 0M6 14v3M3 17h6" fill="none" stroke="#999"/></svg>
    </div>
    <span class="tb t-m3"><svg viewBox="0 0 20 20"><path d="M5 3h10v14H5zM1 5v10M19 5v10" fill="none" stroke="#fff" stroke-width="1.500"/></svg></span>
    <span class="tb t-m11"><svg viewBox="0 0 24 24"><path d="M12 11C6 14 2 10 3 4c4-3 8 1 9 7zM13 11c-3-6 1-10 7-9 3 4 0 9-7 9zM13 13c6-3 10 1 9 7-4 3-8-1-9-7zM11 13c3 6-1 10-7 9-3-4 0-9 7-9z" fill="#e6e6e6"/></svg></span>
    <span class="tb t-m12"><svg viewBox="0 0 24 24"><path d="M5 13h14.500a7.500 7.500 0 1 0-2 5" fill="none" stroke="#eee" stroke-width="3"/><path d="M18 2C11 3 5 11 5 22" fill="none" stroke="#eee"/></svg></span>
    <span class="tb t-m9"><svg viewBox="0 0 24 24"><path d="M19 6a9 9 0 1 0 2 9M12 5a7 7 0 1 0 6 8h-6M12 9a3 3 0 1 0 3 3" fill="none" stroke="#bbb" stroke-width="1.500"/></svg></span>
    <span class="tb t-m9"><svg viewBox="0 0 24 24"><path d="M3 12C3 5 8 2 13 2c6 0 9 5 9 11H9c0 5 7 6 12 3v5c-8 3-18 0-18-9zm6-3h7c0-4-6-4-7 0z" fill="#0a78d4"/></svg></span>
    <span class="tb"><svg viewBox="0 0 24 24"><path d="M5 13h15a8 8 0 1 0-2 5" fill="none" stroke="#49a8e8" stroke-width="3.400"/><path d="M2 22C4 12 12 3 22 2c-4 2-8 5-11 9" fill="none" stroke="#e8c030" stroke-width="2"/></svg></span>
    <span class="tb"><svg viewBox="0 0 24 24"><path d="M1 5h9l2 2h11v14H1z" fill="#f2cf6a"/><rect x="5" y="15" width="14" height="6" fill="#4ca8e8"/><rect x="10" y="16" width="4" height="5" fill="#f2cf6a"/></svg></span>
    <span class="tb run"><svg viewBox="0 0 24 28"><path d="M20 3c-3 8-16 6-16 16 0 9 16 9 17-1 0-4-7-4-8 0 4-1 3 5-1 4-4 0-5-6-1-9 4-2 8-4 9-10z" fill="#1a90e8"/></svg></span>
    <span class="tb run"><svg viewBox="0 0 24 24"><rect x="1" y="1" width="22" height="22" rx="3" fill="#e89a20"/><rect x="5" y="5" width="14" height="15" fill="#fbeab8"/><path d="M7 9h10M7 12h10M7 15h7" stroke="#a07020"/><path d="M12 15l8-11 2 1-8 11z" fill="#d84a20"/></svg></span>
    <span class="tb act2"><svg viewBox="0 0 24 24"><rect x="1" y="1" width="22" height="22" rx="6" fill="#1496f0"/><path d="M12 5v14M6 9a3 3 0 0 0 3 4h6a3 3 0 0 0 3-4" fill="none" stroke="#fff" stroke-width="2"/></svg></span>
    <span class="tb run"><svg viewBox="0 0 24 24"><circle cx="12" cy="12" r="11" fill="#7cc84a"/><path d="M6 13h12a6.500 6.500 0 1 0-2 4" fill="none" stroke="#e8f6d8" stroke-width="2.400"/></svg></span>
    <span class="lnk">链接</span>
    <span class="cpu"><span>29%</span><span>CPU使用</span></span>
    <span class="tray">
      <svg class="tw w0" viewBox="0 0 18 16"><path d="M1 6c4-5 12-5 16 0M4 9c3-3 7-3 10 0M7 12c1-1 3-1 4 0" fill="none" stroke="#7ac810" stroke-width="2"/><circle cx="9" cy="14" r="1.200" fill="#7ac810"/></svg>
      <svg class="tw" viewBox="0 0 14 10"><path d="M1 8l6-6 6 6" fill="none" stroke="#eee" stroke-width="1.300"/></svg>
      <svg class="tw" viewBox="0 0 16 20"><path d="M1 5l3-4h8l3 4-7 14z" fill="#f0608a"/><path d="M4 5h8l-4 14z" fill="#f8a0bc"/></svg>
      <svg class="tw" viewBox="0 0 18 16"><rect x="4" y="6" width="11" height="8" fill="#eee"/><path d="M1 3h4M3 1v5" stroke="#eee"/><rect x="15" y="8" width="2" height="4" fill="#eee"/></svg>
      <svg class="tw" viewBox="0 0 18 16"><path d="M1 14C2 8 8 3 15 2M5 14c1-4 4-7 9-8M9 14c0-2 2-4 5-4" fill="none" stroke="#ccc"/></svg>
      <svg class="tw" viewBox="0 0 16 16"><path d="M2 6h3l3-3v11l-3-3H2z" fill="none" stroke="#eee"/><path d="M11 5c1 2 1 5 0 7M13 3c2 3 2 8 0 11" fill="none" stroke="#ccc"/></svg>
      <svg class="tw kb" viewBox="0 0 24 16"><rect x=".5" y=".5" width="23" height="15" fill="none" stroke="#eee"/><path d="M3 4h18M3 7h18M3 10h18M6 13h12" stroke="#eee" stroke-dasharray="2 1"/></svg>
      <span class="zh">中</span>
      <svg class="tw sg" viewBox="0 0 16 18"><rect x="1" y="1" width="14" height="16" rx="4" fill="#e8502a" transform="rotate(8 8 9)"/><path d="M11 5H6l-1 3h5l-1 4H4" fill="none" stroke="#fff" stroke-width="2"/></svg>
    </span>
    <span class="clock"><span>12:15</span><span>2018/6/17</span></span>
    <span class="notif"><svg viewBox="0 0 18 18"><path d="M1 1h16v13h-5l-3 3-3-3H1z" fill="none" stroke="#fff" stroke-width="1.300"/></svg></span>
  </div>
</div>

<svg class="ellipse" viewBox="0 0 216 112" aria-hidden="true"><ellipse cx="108" cy="56" rx="104" ry="51" fill="none" stroke="#f00" stroke-width="3"/></svg>

<div class="badge"><span>74</span></div>

<div class="wifi">
  <svg class="wicon" viewBox="0 0 40 40"><circle cx="20" cy="20" r="20" fill="#2cb868"/><path d="M8 16c7-7 17-7 24 0M12 21c5-4 11-4 16 0M16 26c2-2 6-2 8 0" fill="none" stroke="#fff" stroke-width="2.400"/><circle cx="20" cy="30" r="2" fill="#fff"/></svg>
  <div class="wtext">
    <span><svg viewBox="0 0 8 12"><path d="M2 11V2" stroke="#e89030" stroke-width="1.600"/><path d="M6 1v9" stroke="#3ab060" stroke-width="1.600"/></svg>0.00K/s</span>
    <span><svg viewBox="0 0 8 12"><rect x="1" y="2" width="6" height="9" fill="#3ab060"/><rect x="3" y="0" width="2" height="2" fill="#3ab060"/></svg>0</span>
  </div>
</div>

<div class="sogou">
  <svg class="slogo" viewBox="0 0 28 26"><rect x="2" y="2" width="24" height="22" rx="5" fill="#f05a20" transform="rotate(-8 14 13)"/><path d="M20 7H10L8 13h10l-2 6H6" fill="none" stroke="#fff" stroke-width="3.600"/></svg>
  <b class="szh">中</b>
  <span class="sp1">°,</span>
  <svg viewBox="0 0 16 16"><circle cx="8" cy="8" r="7" fill="none" stroke="#1e70c8" stroke-width="1.400"/><circle cx="5.500" cy="6.500" r="1" fill="#1e70c8"/><circle cx="10.500" cy="6.500" r="1" fill="#1e70c8"/><path d="M4 10c2 3 6 3 8 0" fill="none" stroke="#1e70c8"/></svg>
  <svg viewBox="0 0 16 16"><rect x="5" y="0" width="6" height="10" rx="3" fill="#1e70c8"/><path d="M3 7c0 6 10 6 10 0M8 12v3M5 15h6" fill="none" stroke="#1e70c8"/></svg>
  <svg viewBox="0 0 16 16"><rect y="2" width="16" height="12" rx="1" fill="#1e70c8"/><path d="M2 5h12M2 8h12M4 11h8" stroke="#fff" stroke-dasharray="1 1"/></svg>
  <svg viewBox="0 0 16 16"><circle cx="7" cy="4" r="3" fill="#aab4c0"/><path d="M2 14c0-7 9-7 10 0z" fill="#aab4c0"/></svg>
  <svg viewBox="0 0 16 16"><path d="M5 1L1 4l2 3 1-1v9h8V6l1 1 2-3-4-3c-1 2-5 2-6 0z" fill="#1e70c8"/></svg>
  <svg viewBox="0 0 16 16"><path d="M1 14l7-7c-1-3 1-6 5-6l-2 3 2 2 2-2c0 4-3 6-6 5l-6 6z" fill="#1e70c8"/></svg>
</div>
</body>
</html>
```
FILE: styles.css
```css
*{box-sizing:border-box}
html,body{margin:0;padding:0;width:1366px;height:768px;overflow:hidden;background:#f0f0f0}
body{position:relative;font:12px "Noto Sans CJK SC","Liberation Sans",sans-serif;color:#222}
i{font-style:normal}
.sprite{position:absolute;width:0;height:0}
.app{display:flex;flex-direction:column;width:1366px;height:768px}
.i{width:16px;height:16px;flex:none;display:block}
.titlebar{height:23px;background:#fff;display:flex;align-items:center;padding-left:3px;flex:none}
.tlogo{width:14px;height:14px;margin-right:6px}
.ttext{white-space:nowrap;font-size:12.5px;letter-spacing:.07px}
.winctl{margin-left:auto;display:flex;padding-right:3px;margin-right:-8px}
.winctl svg{width:46px;height:20px}
.menubar{height:29px;flex:none;background:#f7f7f7;display:flex;align-items:center;padding-left:7px;gap:10.1px;white-space:nowrap;letter-spacing:.05px}
.mserv{margin-left:3px}
.mnew{margin-left:16px;color:#3a6a10;width:147px;display:flex;align-items:center;gap:3px}
.mnew svg{width:12px;height:12px;flex:none}
.mtip{color:#3f7000;font-size:12.300px}
.muser{margin-left:auto;display:flex;align-items:center;background:#f9f9f9;height:27px;padding:0 0 0 5px;width:227px}
.uname{margin-left:11px;font-size:12.5px}
.bean{margin-left:8px}
.bell{width:14px;height:20px;margin-left:9px}
.more{font:bold 12px "Liberation Sans",sans-serif;line-height:10px;display:block;margin-top:-8px}
.mr{margin-left:0;margin-right:4px}
.tool1{height:31px;flex:none;display:flex;align-items:center;white-space:nowrap}
.grp{height:26px;background:#fafafa;display:flex;align-items:center;letter-spacing:.3px}
.g1{width:152px;padding-left:0}
.g2{width:505px;margin-left:1px;padding-left:0}
.g3{width:647px;margin-left:0}
.m11{margin-left:11px}.m4{margin-left:4px}.m6{margin-left:6px}.m16{margin-left:20px}
.m32{margin-left:32px;width:14px}.mr2{margin-left:7px}.m64{margin-left:64px}
.gap3d{margin-left:23px}
.it{display:flex;align-items:center;gap:5px;padding:0 3px;height:24px;white-space:nowrap;flex:none}
.off{color:#a8a8a8}
.white{background:#fff;height:26px}
.g3 .white{padding:0 5px 0 1px;margin-left:2px}
.ddbox{width:11px;height:24px;background:#f2f2f2;display:flex;align-items:center;justify-content:center}
.sigma{width:16px;text-align:center;font:bold 14px "Liberation Serif",serif}
.dd{display:inline-block;width:0;height:0;border:3px solid transparent;border-top:4px solid #111;border-bottom:0;margin:0 2px 0 3px;flex:none}
.dd.tight{margin:0 2px}
.ddbox .dd{margin:0}
.sep{display:block;width:1px;height:20px;background:#c0c0c0;margin-left:3px;flex:none}
.sepx{margin-right:3px}
.main{flex:1;display:flex;min-height:0}
.side{width:165px;flex:none;display:flex;flex-direction:column;padding:1px 0 3px;margin-right:5px}
.navhead{height:16px;background:#0a5ce4;color:#fff;display:flex;justify-content:space-between;align-items:center;padding:0 5px 0 1px;font-size:12.500px;letter-spacing:.2px;flex:none}
.navctl{display:flex;gap:8px}
.navctl svg{width:10px;height:12px}
.sbtn{display:block;width:165px;height:22px;margin:0 0 1px;padding:0;border:1px solid #a0a0a0;background:#f2f2f2;font:13px "Noto Sans CJK SC",sans-serif;color:#222;letter-spacing:.2px;flex:none}
.b2{height:21px}
.b2:last-child{margin-bottom:0}
.tree{flex:1;min-height:0;margin:0 2px 2px;background:#fff;border:1px solid #a8a8a8;position:relative;overflow:hidden;display:flex;flex-direction:column}
.treetool{height:26px;flex:none;display:flex;align-items:center;padding-left:3px;gap:2px}
.treetool svg{width:20px;height:16px}
.rows{flex:1;min-height:0;overflow:hidden;font-family:"Liberation Serif","Noto Sans CJK SC",serif;letter-spacing:.5px;font-size:12px}
.r{height:16px;display:flex;align-items:center;white-space:nowrap;position:relative}
.l1{padding-left:8px;font-family:"Noto Sans CJK SC",sans-serif}
.l1 .i{margin-right:5px}
.l2{padding-left:32px;background-image:linear-gradient(#666 50%,transparent 50%),linear-gradient(#666 50%,transparent 50%);background-size:1px 2px,1px 2px;background-repeat:repeat-y;background-position:32px 0,12px 0}
.l2 .i{margin-right:4px}
.last{background-size:1px 2px,1px 2px}
.tk{width:11px;border-top:1px dotted #666;flex:none}
.tk1{width:7px;border-top:1px dotted #666;flex:none}
.ch{width:8px;height:8px;flex:none;margin-right:2px;display:block;border-right:2px solid #b0b0b0;border-bottom:2px solid #b0b0b0;transform:rotate(-45deg);margin-left:-2px}
.ch.ex{transform:rotate(45deg);border-color:#444}
.sel1 .hl{background:#d9d9d9;padding:0 14px 0 0;height:16px;line-height:16px;display:block}
.vscroll{position:absolute;right:1px;top:0;bottom:0;width:15px;background:#f0f0f0;display:block}
.arr{position:absolute;width:7px;height:7px;border-left:2px solid #555;border-top:2px solid #555;display:block}
.arr.up{left:4px;top:35px;transform:rotate(45deg)}
.arr.down{left:4px;bottom:7px;transform:rotate(225deg)}
.thumb{position:absolute;left:0;right:0;top:142px;height:293px;background:#c8c8c8;display:block}
.work{flex:1;min-width:0;display:flex;flex-direction:column;padding-top:1px}
.row{height:26px;background:#f8f8f8;display:flex;align-items:center;margin-left:1px;white-space:nowrap;letter-spacing:.3px;flex:none}
.r2{width:789px;height:25px;padding-left:3px;margin-bottom:2px}
.grip{display:block;width:3px;height:17px;background:radial-gradient(circle,#999 1px,transparent 1.200px) 0 0/3px 4px repeat-y;flex:none;margin-right:1px}
.row3wrap{display:flex;flex:none;gap:2px;margin-bottom:3px}
.r3{height:26px;margin-bottom:0;padding-left:3px;width:636px}
.r3b{height:26px;margin:0;padding-left:3px;width:421px}
.r4{height:27px;width:1195px;padding-left:1px;margin-bottom:1px;letter-spacing:.15px}
.r4 .blank{letter-spacing:0}
.gr{margin-left:9px}
.sel{display:flex;align-items:center;justify-content:space-between;background:#fff;height:25px;padding:0 0 0 3px;margin-right:4px;font-size:12.500px;flex:none;letter-spacing:0}
.s56{width:56px}.s68{width:68px}.s66{width:66px}.s58{width:58px}
.blank{justify-content:flex-end;margin-left:3px;margin-right:0}
.r3 .grip{margin-right:4px}
.act{background:#dcebfa;border:1px solid #2a7fd0;height:25px;padding:0 3px 0 0;margin:0}
.canvas{display:block;width:1196px;height:306px;flex:none}
.hl-line{stroke:#86864a;stroke-width:.7;fill:none}
.hatch{stroke:#77773f;stroke-width:1}
.olive{fill:#a9c062}
.dkolive{fill:#7a7500}
.teal{fill:#3f7a7c}
.yel{fill:#f2f200}
.yel2{fill:#ff0}
.grn{fill:#00e600}
.vio{fill:#7f00f0}
.mag{stroke:#b060a0;stroke-width:1.500;fill:none}
.capt{font:30px "Liberation Sans",sans-serif}
.c-white{fill:#ddd}
.c-blue{fill:#1a20e8}
.c-pink{fill:#e828e8}
.c-purple{fill:#7766bb}
.box{fill:none;stroke:#999}
.wline{stroke:#fff;stroke-width:1.500}
.purtxt{font:15px "Noto Sans CJK SC",sans-serif;fill:#7766aa}
.dimtxt{font:14px "Liberation Sans",sans-serif;fill:#b8b8b8}
.gline{stroke:#0a7a0a;stroke-width:1;fill:none}
.rline{stroke:#f00;stroke-width:1;fill:none}
.axl{font:bold 13px "Liberation Mono",monospace;fill:#bbb;text-anchor:middle}
.axm{font:bold 13px "Liberation Sans",sans-serif;fill:#e040c0}
.axg{stroke:#0f0;stroke-width:3}.axgf{fill:#0f0}
.axr{stroke:#f00;stroke-width:3}.axrf{fill:#f00}
.thing{stroke:#0f0;fill:none}.thinr{stroke:#f00;fill:none}
.snap{height:28px;flex:none;display:flex;margin:0 0 3px;white-space:nowrap;letter-spacing:.3px}
.sgrp{display:flex;align-items:center;background:#f8f8f8;margin-left:1px}
.s1{width:209px}
.s1 .grip{margin-right:2px}
.s2{width:676px;margin-left:2px}
.s2 .grip{margin-right:4px}
.lab{color:#777;margin-left:3px;flex:none}
.deg{margin-left:4px}
.spin{position:relative;display:block;height:21px;background:#f8f8f8;border:1px solid #777;color:#777;text-align:right;padding-right:16px;line-height:19px;margin-left:2px;flex:none;letter-spacing:.6px;font-size:13px}
.w56{width:58px}.w58{width:58px}.w68{width:68px}
.sp{position:absolute;right:5px;top:4px;width:0;height:0;border:3px solid transparent;border-bottom:4px solid #555;border-top:0;display:block}
.sp::after{content:"";position:absolute;left:-3px;top:7px;border:3px solid transparent;border-top:4px solid #555;border-bottom:0}
.cb{display:block;width:10px;height:10px;border:1px solid #888;background:#fff;margin:0 10px 0 4px;flex:none}
.rotl{margin-right:3px}
.panel{flex:1;min-height:0;display:flex}
.strip{width:12px;flex:none;background:radial-gradient(circle,#bbb 1px,transparent 1.200px) 3px 0/6px 4px;padding:2px 0 0 2px;height:199px}
.xb{display:block;width:9px;height:9px}
.pbody{flex:1;min-width:0;display:flex;flex-direction:column;background:#fff;border-bottom:1px solid #aaa;margin-bottom:3px}
.ptool{height:27px;flex:none;display:flex;align-items:center;background:linear-gradient(#fff,#ececec);padding-left:1px;white-space:nowrap;letter-spacing:.1px}
.pt{padding:0 5px;flex:none}
.grid{flex:1;min-height:0;overflow:hidden;border-top:1px solid #bbb;border-left:1px solid #bbb}
table{border-collapse:collapse;table-layout:fixed;width:1183px;font-family:"Liberation Serif","Noto Sans CJK SC",serif}
.w32{width:32px}.w41{width:41px}.w81{width:81px}.w82{width:82px}.w101{width:101px}.w71{width:71px}.w15{width:15px}
th{font:12px "Noto Sans CJK SC",sans-serif;font-weight:400;height:19px;padding:0;background:linear-gradient(#fff,#f4f4f4);border:1px solid #c8c8c8;letter-spacing:.4px;color:#222}
th.kua{background:linear-gradient(#fce0a8,#f4c468);color:#660066;font-size:13px}
td{height:19px;padding:0 1px;border:1px solid #c8c8c8;font-size:12px;letter-spacing:.5px;white-space:pre;overflow:hidden;background:#fff}
.on td{background:#a6c8ee;height:20px;border-color:#bcd2ea}
td.no{text-align:center;background:#f3f3f3}
.on td.no{background:#fbd89a;color:#660066}
td.cur{position:relative;border:3px solid #000;overflow:visible;background:#a6c8ee}
.handle{position:absolute;right:-5px;bottom:-5px;width:5px;height:5px;background:#000;display:block}
td.below{border-right:1px solid #000}
.grid{height:153px}
.hscroll{height:16px;flex:none;background:#f0f0f0;position:relative;margin-bottom:1px}
.hthumb{position:absolute;left:806px;width:295px;top:0;bottom:0;background:#c8c8c8;display:block}
.arr.left{left:7px;top:4px;transform:rotate(-45deg);width:6px;height:6px}
.arr.right{right:7px;top:4px;transform:rotate(135deg);width:6px;height:6px}
.status{height:20px;flex:none;display:flex;gap:2px;font:12px "Liberation Serif","Noto Sans CJK SC",serif;background:#f0f0f0}
.c{display:flex;align-items:center;height:20px;padding-left:2px;border:1px solid #dcdcdc;background:#f2f2f2;white-space:nowrap;overflow:hidden;flex:none}
.c1{width:148px}.c2{width:78px}.c3{width:99px}.c4{width:48px;padding-left:1px}.c5{width:915px;letter-spacing:.25px;padding-left:1px}.c6{width:67px}
.taskbar{height:40px;flex:none;background:#03131a;display:flex;align-items:center;color:#e4e4e4}
.start{width:48px;height:40px;background:#000;display:flex;align-items:center;justify-content:center}
.start svg{width:16px;height:16px}
.search{width:344px;height:40px;background:#383838;display:flex;align-items:center;padding-left:11px;color:#8a8a8a;font-size:13px;flex:none}
.cort{width:20px;height:20px;margin-right:5px}
.stext{letter-spacing:.3px;width:282px}
.mic{width:12px;height:18px}
.tb{width:40px;height:40px;display:flex;align-items:center;justify-content:center;flex:none}
.tb svg{width:24px;height:24px}
.t-m3{margin-left:3px}
.t-m3 svg{width:20px;height:20px}
.t-m11{margin-left:11px}.t-m12{margin-left:12px}.t-m9{margin-left:9px}
.act2{background:#3a4248;box-shadow:inset 0 -2px 0 #76b9ed}
.run{background:linear-gradient(#76b9ed,#76b9ed) center bottom/32px 2px no-repeat}
.lnk{margin-left:13px;color:#ccc;font-size:12px;flex:none}
.cpu{margin-left:15px;display:flex;flex-direction:column;align-items:center;font-size:12.500px;line-height:18px;width:60px;flex:none;white-space:nowrap}
.tray{display:flex;align-items:center;margin-left:17px;flex:none;width:225px;gap:8px}
.tw{width:16px;height:16px;flex:none}
.w0{width:18px}
.kb{width:24px;margin-left:5px}
.zh{margin-left:4px;font-size:13px}
.sg{margin-left:6px}
.clock{display:flex;flex-direction:column;align-items:center;font-size:13px;line-height:19px;width:62px;flex:none;margin-left:15px;color:#d0d0d0}
.notif{background:#000;height:40px;flex:1;display:flex;align-items:center;padding-left:17px}
.notif svg{width:18px;height:18px}
.ellipse{position:absolute;left:744px;top:508px;width:216px;height:112px}
.badge{position:absolute;left:1008px;top:-30px;width:46px;height:48px;border-radius:50%;background:#3cae4a;border:3px solid #cfe0d0;box-shadow:0 1px 2px #888;color:#fff;font:bold 11px "Liberation Sans",sans-serif;display:flex;align-items:flex-end;justify-content:center;padding-bottom:5px}
.sogou{position:absolute;left:769px;top:16px;width:207px;height:25px;background:#f4f8fc;border:1px solid #b4c4d8;display:flex;align-items:center;gap:6px;padding-left:33px}
.sogou svg{width:16px;height:16px;flex:none}
.sogou .slogo{position:absolute;left:-1px;top:-1px;width:30px;height:28px}
.szh{color:#1e70c8;font-size:14px;width:16px}
.sp1{color:#1e70c8;font:bold 13px "Liberation Sans",sans-serif;width:16px}
.wifi{position:absolute;left:844px;top:30px;width:118px;height:50px;background:#fff;border-radius:25px;box-shadow:0 3px 6px rgba(0,0,0,.25);display:flex;align-items:center;padding:4px 0 0 5px}
.wicon{width:40px;height:40px;margin-top:-1px;flex:none}
.wtext{margin-left:9px;font-size:12px;color:#777;display:flex;flex-direction:column;gap:5px;margin-top:-3px}
.wtext span{display:flex;align-items:center;gap:4px}
.wtext svg{width:8px;height:12px}
```
